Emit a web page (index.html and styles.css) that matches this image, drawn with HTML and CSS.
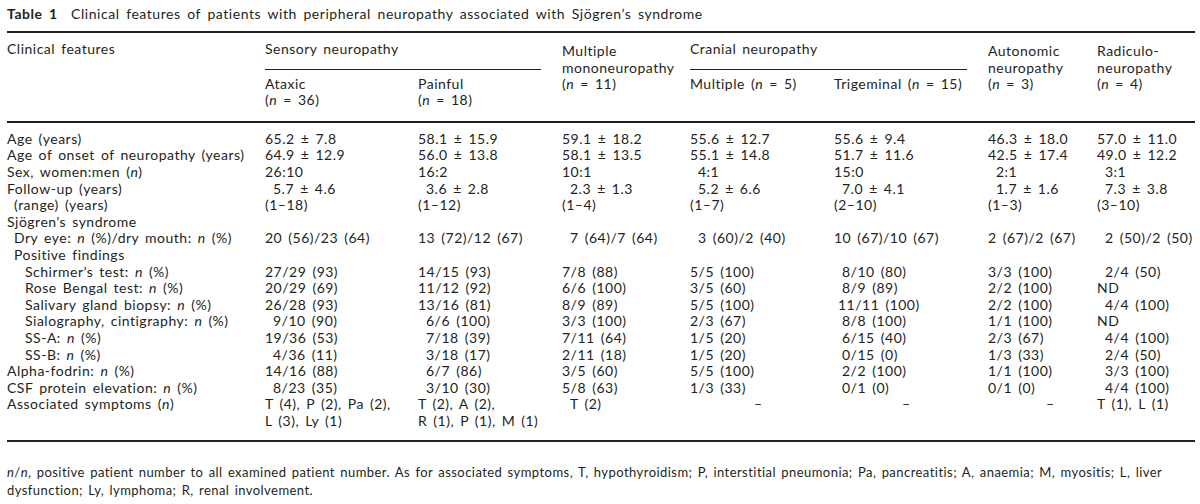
FILE: index.html
```html
<!DOCTYPE html>
<html lang="en">
<head>
<meta charset="utf-8">
<title>Table 1</title>
<link rel="stylesheet" href="styles.css">
</head>
<body>
<div class="page">
  <p class="caption"><b>Table 1</b>&nbsp; Clinical features of patients with peripheral neuropathy associated with Sjögren’s syndrome</p>
  <table class="tbl">
    <colgroup>
      <col class="c1"><col class="c2"><col class="c3"><col class="c4"><col class="c5"><col class="c6"><col class="c7"><col class="c8">
    </colgroup>
    <thead>
      <tr class="h1">
        <th rowspan="2">Clinical features</th>
        <th colspan="2"><div class="grp">Sensory neuropathy</div></th>
        <th rowspan="2" class="rs3">Multiple<br>mononeuropathy<br>(<i>n</i> = 11)</th>
        <th colspan="2"><div class="grp">Cranial neuropathy</div></th>
        <th rowspan="2" class="rs3">Autonomic<br>neuropathy<br>(<i>n</i> = 3)</th>
        <th rowspan="2" class="rs3">Radiculo-<br>neuropathy<br>(<i>n</i> = 4)</th>
      </tr>
      <tr class="h2">
        <th>Ataxic<br>(<i>n</i> = 36)</th>
        <th>Painful<br>(<i>n</i> = 18)</th>
        <th>Multiple (<i>n</i> = 5)</th>
        <th>Trigeminal (<i>n</i> = 15)</th>
      </tr>
    </thead>
    <tbody>
      <tr><td>Age (years)</td><td>65.2 ± 7.8</td><td>58.1 ± 15.9</td><td>59.1 ± 18.2</td><td>55.6 ± 12.7</td><td>55.6 ± 9.4</td><td>46.3 ± 18.0</td><td>57.0 ± 11.0</td></tr>
      <tr><td>Age of onset of neuropathy (years)</td><td>64.9 ± 12.9</td><td>56.0 ± 13.8</td><td>58.1 ± 13.5</td><td>55.1 ± 14.8</td><td>51.7 ± 11.6</td><td>42.5 ± 17.4</td><td>49.0 ± 12.2</td></tr>
      <tr><td>Sex, women:men (<i>n</i>)</td><td>26:10</td><td>16:2</td><td>10:1</td><td class="ind">4:1</td><td>15:0</td><td class="ind">2:1</td><td class="ind">3:1</td></tr>
      <tr><td>Follow-up (years)</td><td class="ind">5.7 ± 4.6</td><td class="ind">3.6 ± 2.8</td><td class="ind">2.3 ± 1.3</td><td class="ind">5.2 ± 6.6</td><td class="ind">7.0 ± 4.1</td><td class="ind">1.7 ± 1.6</td><td class="ind">7.3 ± 3.8</td></tr>
      <tr><td class="lv1">(range) (years)</td><td>(1–18)</td><td>(1–12)</td><td>(1–4)</td><td>(1–7)</td><td>(2–10)</td><td>(1–3)</td><td>(3–10)</td></tr>
      <tr><td>Sjögren’s syndrome</td><td></td><td></td><td></td><td></td><td></td><td></td><td></td></tr>
      <tr><td class="lv1">Dry eye: <i>n</i> (%)/dry mouth: <i>n</i> (%)</td><td>20 (56)/23 (64)</td><td>13 (72)/12 (67)</td><td class="ind">7 (64)/7 (64)</td><td class="ind">3 (60)/2 (40)</td><td>10 (67)/10 (67)</td><td>2 (67)/2 (67)</td><td class="ind">2 (50)/2 (50)</td></tr>
      <tr><td class="lv1">Positive findings</td><td></td><td></td><td></td><td></td><td></td><td></td><td></td></tr>
      <tr><td class="lv2">Schirmer’s test: <i>n</i> (%)</td><td>27/29 (93)</td><td>14/15 (93)</td><td>7/8 (88)</td><td>5/5 (100)</td><td class="ind">8/10 (80)</td><td>3/3 (100)</td><td class="ind">2/4 (50)</td></tr>
      <tr><td class="lv2">Rose Bengal test: <i>n</i> (%)</td><td>20/29 (69)</td><td>11/12 (92)</td><td>6/6 (100)</td><td>3/5 (60)</td><td class="ind">8/9 (89)</td><td>2/2 (100)</td><td>ND</td></tr>
      <tr><td class="lv2">Salivary gland biopsy: <i>n</i> (%)</td><td>26/28 (93)</td><td>13/16 (81)</td><td>8/9 (89)</td><td>5/5 (100)</td><td class="ind-s">11/11 (100)</td><td>2/2 (100)</td><td class="ind">4/4 (100)</td></tr>
      <tr><td class="lv2">Sialography, cintigraphy: <i>n</i> (%)</td><td class="ind">9/10 (90)</td><td class="ind">6/6 (100)</td><td>3/3 (100)</td><td>2/3 (67)</td><td class="ind">8/8 (100)</td><td>1/1 (100)</td><td>ND</td></tr>
      <tr><td class="lv2">SS-A: <i>n</i> (%)</td><td>19/36 (53)</td><td class="ind">7/18 (39)</td><td>7/11 (64)</td><td>1/5 (20)</td><td class="ind">6/15 (40)</td><td>2/3 (67)</td><td class="ind">4/4 (100)</td></tr>
      <tr><td class="lv2">SS-B: <i>n</i> (%)</td><td class="ind">4/36 (11)</td><td class="ind">3/18 (17)</td><td>2/11 (18)</td><td>1/5 (20)</td><td class="ind">0/15 (0)</td><td>1/3 (33)</td><td class="ind">2/4 (50)</td></tr>
      <tr><td>Alpha-fodrin: <i>n</i> (%)</td><td>14/16 (88)</td><td class="ind">6/7 (86)</td><td>3/5 (60)</td><td>5/5 (100)</td><td class="ind">2/2 (100)</td><td>1/1 (100)</td><td class="ind">3/3 (100)</td></tr>
      <tr><td>CSF protein elevation: <i>n</i> (%)</td><td class="ind">8/23 (35)</td><td class="ind">3/10 (30)</td><td>5/8 (63)</td><td>1/3 (33)</td><td class="ind">0/1 (0)</td><td>0/1 (0)</td><td class="ind">4/4 (100)</td></tr>
      <tr><td>Associated symptoms (<i>n</i>)</td><td>T (4), P (2), Pa (2),<br>L (3), Ly (1)</td><td>T (2), A (2),<br>R (1), P (1), M (1)</td><td class="ind">T (2)</td><td class="dash-a">–</td><td class="dash-b">–</td><td class="dash-c">–</td><td>T (1), L (1)</td></tr>
    </tbody>
  </table>
  <p class="note"><i>n</i>/<i>n</i>, positive patient number to all examined patient number. As for associated symptoms, T, hypothyroidism; P, interstitial pneumonia; Pa, pancreatitis; A, anaemia; M, myositis; L, liver<br>dysfunction; Ly, lymphoma; R, renal involvement.</p>
</div>
</body>
</html>
```

FILE: styles.css
```css
* {
  box-sizing: border-box;
}

body {
  margin: 0;
  background: #ffffff;
  color: #231f20;
  font-family: Lato, "Open Sans", "Liberation Sans", sans-serif;
}

.page {
  padding: 5px 5px 0 7px;
}

.caption {
  margin: 0;
  font-size: 14px;
  line-height: 18px;
  letter-spacing: 0.55px;
  word-spacing: 2.5px;
}

.caption b {
  font-weight: 700;
}

.tbl {
  width: 1188px;
  margin-top: 8px;
  border-collapse: collapse;
  table-layout: fixed;
  font-size: 14px;
  line-height: 16.6px;
  letter-spacing: 0.5px;
  word-spacing: 2px;
  border-top: 2px solid #231f20;
  border-bottom: 2px solid #231f20;
}

.c1 { width: 258px; }
.c2 { width: 153px; }
.c3 { width: 144px; }
.c4 { width: 128px; }
.c5 { width: 144px; }
.c6 { width: 154px; }
.c7 { width: 109px; }
.c8 { width: 98px; }

.tbl th,
.tbl td {
  padding: 0;
  text-align: left;
  vertical-align: top;
  font-weight: 400;
  white-space: nowrap;
}

.tbl thead {
  border-bottom: 2px solid #231f20;
}

.tbl .h1 th {
  padding-top: 8px;
}

.tbl .h1 th.rs3 {
  padding-top: 10px;
}

.grp {
  margin-right: 21px;
  padding-bottom: 11px;
  border-bottom: 1.5px solid #231f20;
}

.tbl .h2 th {
  padding-top: 6px;
  padding-bottom: 12px;
}

.tbl tbody tr:first-child td {
  padding-top: 8px;
}

.tbl tbody tr:last-child td {
  padding-bottom: 11px;
}

.tbl td.lv1 {
  padding-left: 7px;
}

.tbl td.lv2 {
  padding-left: 18px;
}

.tbl td.ind {
  padding-left: 8px;
}

.tbl td.ind-s {
  padding-left: 4px;
}

.tbl td.dash-a {
  padding-left: 64px;
}

.tbl td.dash-b {
  padding-left: 68px;
}

.tbl td.dash-c {
  padding-left: 58px;
}

.note {
  margin: 21px 0 0;
  font-size: 13px;
  line-height: 18px;
  letter-spacing: 0.45px;
  word-spacing: 1.5px;
}
```
